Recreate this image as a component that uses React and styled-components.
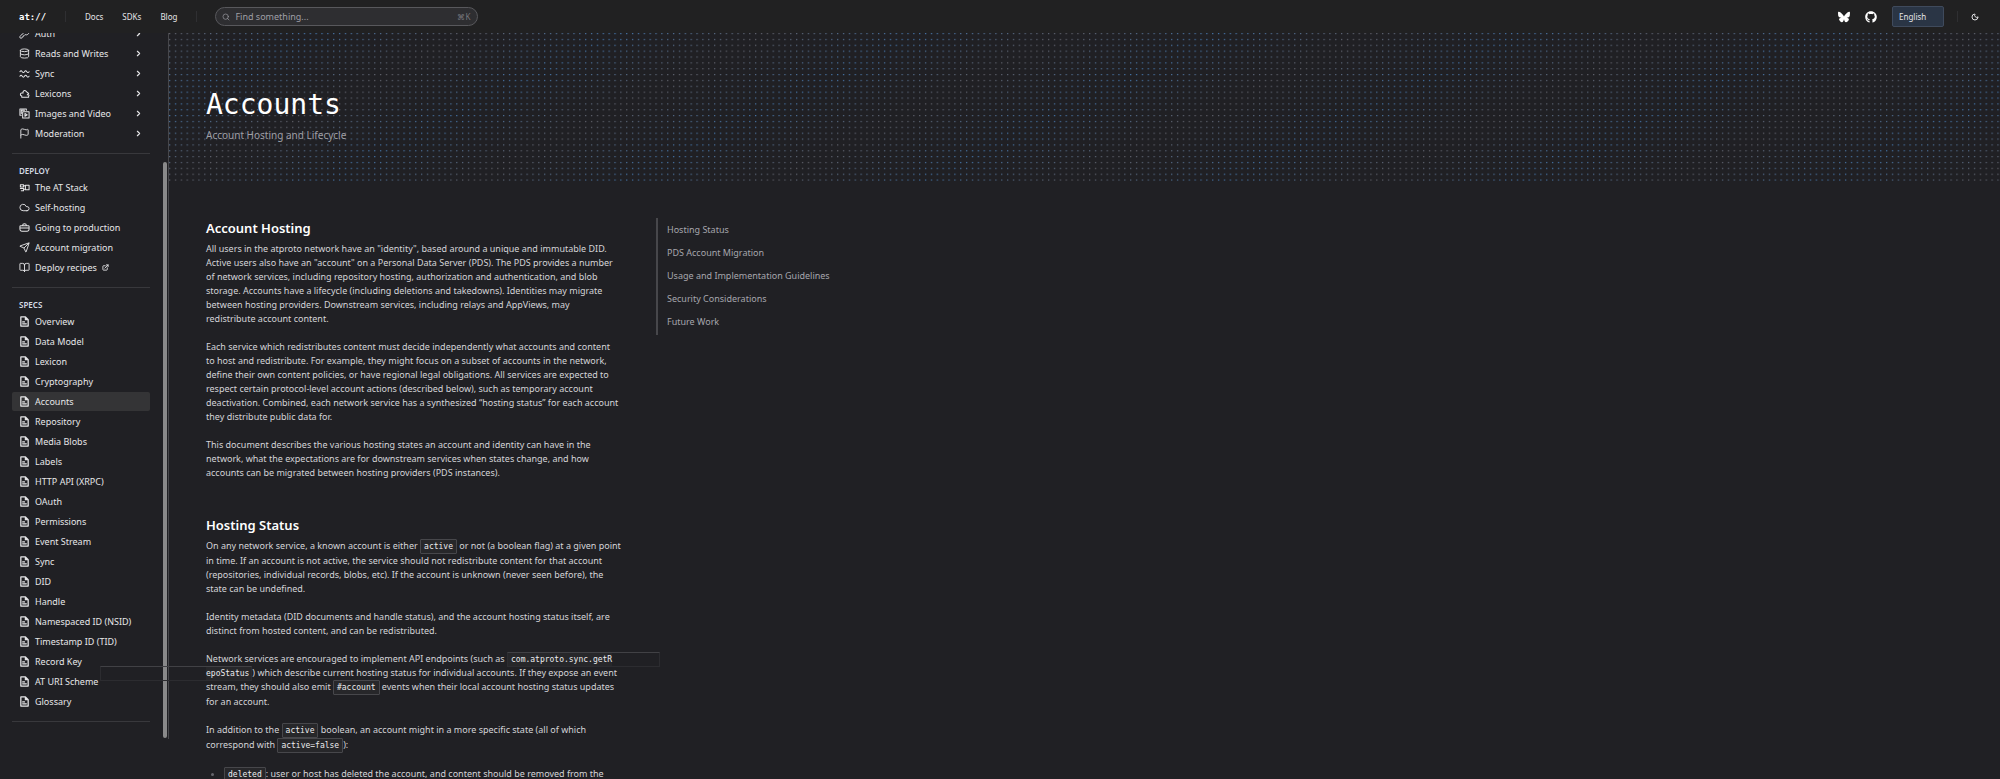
import React from "react";
import styled, { createGlobalStyle, css } from "styled-components";
import { Search, Moon, ExternalLink, Database, Cloud, Send, BookOpen, Flag, KeyRound, ChevronRight } from "lucide-react";
import { FaBluesky, FaGithub } from "react-icons/fa6";

const sans = `"Noto Sans", Roboto, "Liberation Sans", sans-serif`;
const mono = `"DejaVu Sans Mono", "Liberation Mono", monospace`;

const GlobalStyle = createGlobalStyle`
  * { box-sizing: border-box; }
  body { margin: 0; background: #202024; color: #d4d4d8; font-family: ${sans}; font-size: 9px; line-height: 14px; }
  a { color: inherit; text-decoration: none; }
  button { font: inherit; color: inherit; cursor: pointer; }
`;

const Page = styled.div`
  height: 100vh;
  overflow: hidden;
  display: flex;
  flex-direction: column;
`;

const Header = styled.header`
  flex: none;
  height: 33px;
  display: flex;
  align-items: center;
  padding: 0 21px 0 19px;
  background: #212122;
  color: #e4e4e7;
`;

const Logo = styled.a`
  width: 46px;
  font: bold 9px/14px ${mono};
  color: #fff;
`;

const Rule = styled.span`
  width: 1px;
  height: 11px;
  background: #2f2f32;
`;

const TopNav = styled.nav`
  display: flex;
  gap: 19px;
  padding: 0 19px;
  font-size: 8px;
`;

const SearchBox = styled.label`
  display: flex;
  align-items: center;
  gap: 5px;
  width: 263px;
  height: 19px;
  margin-left: 18px;
  padding: 0 7px 0 6px;
  border: 1px solid #58585c;
  border-radius: 10px;
  background: #2e2e31;
  color: #9f9fa6;
  input {
    flex: 1;
    min-width: 0;
    padding: 0;
    border: 0;
    outline: 0;
    background: none;
    color: inherit;
    font: inherit;
  }
  input::placeholder { color: #9f9fa6; opacity: 1; }
  kbd { font: 8px/14px ${sans}; color: #77777d; }
`;

const Tools = styled.div`
  display: flex;
  align-items: center;
  margin-left: auto;
  gap: 13px;
  button { display: flex; padding: 0; border: 0; background: none; }
`;

const Links = styled.div`
  display: flex;
  align-items: center;
  gap: 15px;
  a { display: flex; }
`;

const Language = styled.select`
  appearance: none;
  width: 52px;
  height: 21px;
  padding: 0 6px;
  border: 1px solid #3f4a5c;
  border-radius: 2px;
  background: #2a3545;
  color: #e4e4e7;
  font: 8px/14px ${sans};
`;

const Body = styled.div`
  flex: 1;
  min-height: 0;
  display: flex;
  align-items: flex-start;
`;

const Sidebar = styled.aside`
  flex: none;
  width: 169px;
  height: calc(100% - 40px);
  display: flex;
  border-right: 1px solid #47474b;
`;

const SideScroll = styled.nav`
  flex: 1;
  height: 100%;
  overflow: hidden;
  display: flex;
  flex-direction: column;
  justify-content: flex-end;
  padding: 0 13px 17px 12px;
`;

const ScrollThumb = styled.div`
  flex: none;
  width: 4px;
  margin: 129px 1px 1px 0;
  border-radius: 2px;
  background: #89898a;
`;

const Group = styled.section`
  flex: none;
  padding-bottom: 9px;
  border-bottom: 1px solid #38383c;
  & + & { padding-top: 10px; }
`;

const GroupTitle = styled.h2`
  margin: 0;
  padding: 0 7px;
  font-size: 8px;
  line-height: 14px;
  font-weight: 600;
  color: #d4dbe4;
  text-transform: uppercase;
`;

const SideLink = styled.a`
  display: flex;
  align-items: center;
  gap: 5px;
  height: 19px;
  margin-bottom: 1px;
  padding: 0 7px;
  border-radius: 2px;
  color: #e6e6e8;
  white-space: nowrap;
  ${(p) => p.$active && css`background: #343436;`}
  svg { flex: none; }
  svg:nth-of-type(2) { margin-left: ${(p) => (p.$external ? "0" : "auto")}; }
`;

const Main = styled.main`
  flex: 1;
  min-width: 0;
`;

const Hero = styled.div`
  display: grid;
  height: 148px;
  > * { grid-area: 1 / 1; }
`;

const HeroText = styled.div`
  padding: 54px 37px 0;
  z-index: 1;
`;

const Title = styled.h1`
  margin: 0;
  font: 28px/36px ${mono};
  color: #fff;
`;

const Subtitle = styled.p`
  margin: 5px 0 0;
  font-size: 10px;
  color: #9f9fa6;
`;

const Columns = styled.div`
  display: flex;
  align-items: flex-start;
  gap: 37px;
  padding: 37px 37px 0;
`;

const Article = styled.article`
  flex: none;
  width: 413px;
  white-space: nowrap;
`;

const Heading = styled.h2`
  margin: 0 0 4px;
  padding-top: ${(p) => (p.$spaced ? "21px" : "0")};
  font-size: 13px;
  line-height: 20px;
  font-weight: 600;
  color: #fff;
`;

const Text = styled.p`
  margin: 0 0 14px;
`;

const codeText = css`
  display: inline-block;
  vertical-align: top;
  font: 8px/13px ${mono};
  color: #ececee;
  background: #27272a;
`;

const Code = styled.code`
  ${codeText}
  padding: 0 3px;
  border: 1px solid #47474b;
  border-radius: 1px;
`;

const SplitCode = styled.code`
  ${codeText}
  position: relative;
  padding: ${(p) => (p.$end ? "1px 3px 0 0" : "1px 0 0 4px")};
  &::after {
    content: "";
    position: absolute;
    top: 0;
    bottom: -1px;
    left: ${(p) => (p.$end ? "-106px" : "0")};
    right: ${(p) => (p.$end ? "0" : "-48px")};
    border: 1px solid #2c2c30;
    border-top-color: #414145;
    pointer-events: none;
  }
`;

const List = styled.ul`
  margin: 0;
  padding-left: 18px;
  li::marker { color: #66666c; }
`;

const Toc = styled.nav`
  display: flex;
  flex-direction: column;
  padding: 0 0 2px 9px;
  border-left: 2px solid #47474b;
  color: #a6a6ad;
  a { line-height: 23px; }
`;

function Dots() {
  return (
    <svg width="100%" height="100%" aria-hidden="true">
      <defs>
        <linearGradient id="tint" gradientUnits="userSpaceOnUse" x1="0" y1="0" x2="30" y2="60" spreadMethod="reflect">
          <stop offset="0" stopColor="#606068" />
          <stop offset="1" stopColor="#4474a8" />
        </linearGradient>
        <pattern id="dots" width="5.86" height="5.86" patternUnits="userSpaceOnUse">
          <rect width="1.3" height="1.2" fill="#fff" />
        </pattern>
        <mask id="grid">
          <rect width="100%" height="100%" fill="url(#dots)" />
        </mask>
      </defs>
      <rect width="100%" height="100%" fill="url(#tint)" mask="url(#grid)" />
    </svg>
  );
}

const Glyph = styled.svg.attrs({ viewBox: "0 0 24 24", "aria-hidden": true })`
  width: 11px;
  height: 11px;
  fill: none;
  stroke: currentColor;
  stroke-width: 2.2;
  stroke-linejoin: round;
  stroke-linecap: round;
`;

const Waves = () => (
  <Glyph><path d="M2 8q2.500-4 5 0t5 0t5 0t5 0M2 18q2.500-4 5 0t5 0t5 0t5 0" /></Glyph>
);
const Puzzle = () => (
  <Glyph><path d="M6 20v-3a3 3 0 1 1 0-6h3a3.500 3.500 0 1 1 7-3l5 4-3 3a2 2 0 1 1 3 3v2Z" /></Glyph>
);
const Media = () => (
  <Glyph><path d="M8 8h14v14H8ZM5 16H2V2h14v3M5 5v7M5 5h7M13 12v6l5-3Z" /></Glyph>
);
const Stack = () => (
  <Glyph><path d="M3 6h7v5H3ZM3 14h7v5H5M14 7h8v10h-8ZM10 8h4M10 16h4" /></Glyph>
);
const Toolbox = () => (
  <Glyph><path d="M2 13h20M4 8h16q2 0 2 2v6q0 4-4 4H6q-4 0-4-4v-6q0-2 2-2ZM8 7q0-3 4-3t4 3" /></Glyph>
);
const Document = () => (
  <Glyph><path d="M4 2h10l6 6v14H4ZM14 2v6h6M8 13h4M8 17h8" strokeWidth="2.8" /></Glyph>
);

const guides = [
  ["Auth", KeyRound],
  ["Reads and Writes", Database],
  ["Sync", Waves],
  ["Lexicons", Puzzle],
  ["Images and Video", Media],
  ["Moderation", Flag],
];
const deploy = [
  ["The AT Stack", Stack],
  ["Self-hosting", Cloud],
  ["Going to production", Toolbox],
  ["Account migration", Send],
  ["Deploy recipes", BookOpen, true],
];
const specs = [
  "Overview", "Data Model", "Lexicon", "Cryptography", "Accounts", "Repository", "Media Blobs",
  "Labels", "HTTP API (XRPC)", "OAuth", "Permissions", "Event Stream", "Sync", "DID", "Handle",
  "Namespaced ID (NSID)", "Timestamp ID (TID)", "Record Key", "AT URI Scheme", "Glossary",
];
const toc = ["Hosting Status", "PDS Account Migration", "Usage and Implementation Guidelines", "Security Considerations", "Future Work"];

function Lines({ of }) {
  return of.map((line, i) => (
    <React.Fragment key={i}>
      {i > 0 && <br />}
      {line}
    </React.Fragment>
  ));
}

export default function App() {
  return (
    <Page>
      <GlobalStyle />
      <Header>
        <Logo href="#">at://</Logo>
        <Rule />
        <TopNav>
          <a href="#docs">Docs</a>
          <a href="#sdks">SDKs</a>
          <a href="#blog">Blog</a>
        </TopNav>
        <Rule />
        <SearchBox>
          <Search size={8} />
          <input placeholder="Find something..." aria-label="Find something" />
          <kbd>⌘K</kbd>
        </SearchBox>
        <Tools>
          <Links>
            <a href="#bluesky" aria-label="Bluesky"><FaBluesky size={12} color="#fff" /></a>
            <a href="#github" aria-label="GitHub"><FaGithub size={12} color="#fff" /></a>
            <Language aria-label="Language" defaultValue="en"><option value="en">English</option></Language>
          </Links>
          <Rule />
          <button type="button" aria-label="Toggle theme"><Moon size={8} strokeWidth={3} /></button>
        </Tools>
      </Header>
      <Body>
        <Sidebar>
          <SideScroll aria-label="Documentation">
            <Group>
              {guides.map(([label, Icon]) => (
                <SideLink href="#guide" key={label}><Icon size={11} />{label}<ChevronRight size={9} strokeWidth={3} /></SideLink>
              ))}
            </Group>
            <Group>
              <GroupTitle>Deploy</GroupTitle>
              {deploy.map(([label, Icon, external]) => (
                <SideLink href="#deploy" key={label} $external={external}><Icon size={11} />{label}{external && <ExternalLink size={7} strokeWidth={3} />}</SideLink>
              ))}
            </Group>
            <Group>
              <GroupTitle>Specs</GroupTitle>
              {specs.map((label) => (
                <SideLink href="#spec" key={label} $active={label === "Accounts"}><Document />{label}</SideLink>
              ))}
            </Group>
          </SideScroll>
          <ScrollThumb />
        </Sidebar>
        <Main>
          <Hero>
            <Dots />
            <HeroText>
              <Title>Accounts</Title>
              <Subtitle>Account Hosting and Lifecycle</Subtitle>
            </HeroText>
          </Hero>
          <Columns>
            <Article>
              <Heading>Account Hosting</Heading>
              <Text><Lines of={[
                'All users in the atproto network have an "identity", based around a unique and immutable DID.',
                'Active users also have an "account" on a Personal Data Server (PDS). The PDS provides a number',
                "of network services, including repository hosting, authorization and authentication, and blob",
                "storage. Accounts have a lifecycle (including deletions and takedowns). Identities may migrate",
                "between hosting providers. Downstream services, including relays and AppViews, may",
                "redistribute account content.",
              ]} /></Text>
              <Text><Lines of={[
                "Each service which redistributes content must decide independently what accounts and content",
                "to host and redistribute. For example, they might focus on a subset of accounts in the network,",
                "define their own content policies, or have regional legal obligations. All services are expected to",
                "respect certain protocol-level account actions (described below), such as temporary account",
                "deactivation. Combined, each network service has a synthesized “hosting status” for each account",
                "they distribute public data for.",
              ]} /></Text>
              <Text><Lines of={[
                "This document describes the various hosting states an account and identity can have in the",
                "network, what the expectations are for downstream services when states change, and how",
                "accounts can be migrated between hosting providers (PDS instances).",
              ]} /></Text>
              <Heading $spaced>Hosting Status</Heading>
              <Text><Lines of={[
                <>On any network service, a known account is either <Code>active</Code> or not (a boolean flag) at a given point</>,
                "in time. If an account is not active, the service should not redistribute content for that account",
                "(repositories, individual records, blobs, etc). If the account is unknown (never seen before), the",
                "state can be undefined.",
              ]} /></Text>
              <Text><Lines of={[
                "Identity metadata (DID documents and handle status), and the account hosting status itself, are",
                "distinct from hosted content, and can be redistributed.",
              ]} /></Text>
              <Text><Lines of={[
                <>Network services are encouraged to implement API endpoints (such as <SplitCode>com.atproto.sync.getR</SplitCode></>,
                <><SplitCode $end>epoStatus</SplitCode>) which describe current hosting status for individual accounts. If they expose an event</>,
                <>stream, they should also emit <Code>#account</Code> events when their local account hosting status updates</>,
                "for an account.",
              ]} /></Text>
              <Text><Lines of={[
                <>In addition to the <Code>active</Code> boolean, an account might in a more specific state (all of which</>,
                <>correspond with <Code>active=false</Code>):</>,
              ]} /></Text>
              <List>
                <li><Code>deleted</Code>: user or host has deleted the account, and content should be removed from the</li>
              </List>
            </Article>
            <Toc aria-label="On this page">
              {toc.map((t) => <a href="#section" key={t}>{t}</a>)}
            </Toc>
          </Columns>
        </Main>
      </Body>
    </Page>
  );
}
